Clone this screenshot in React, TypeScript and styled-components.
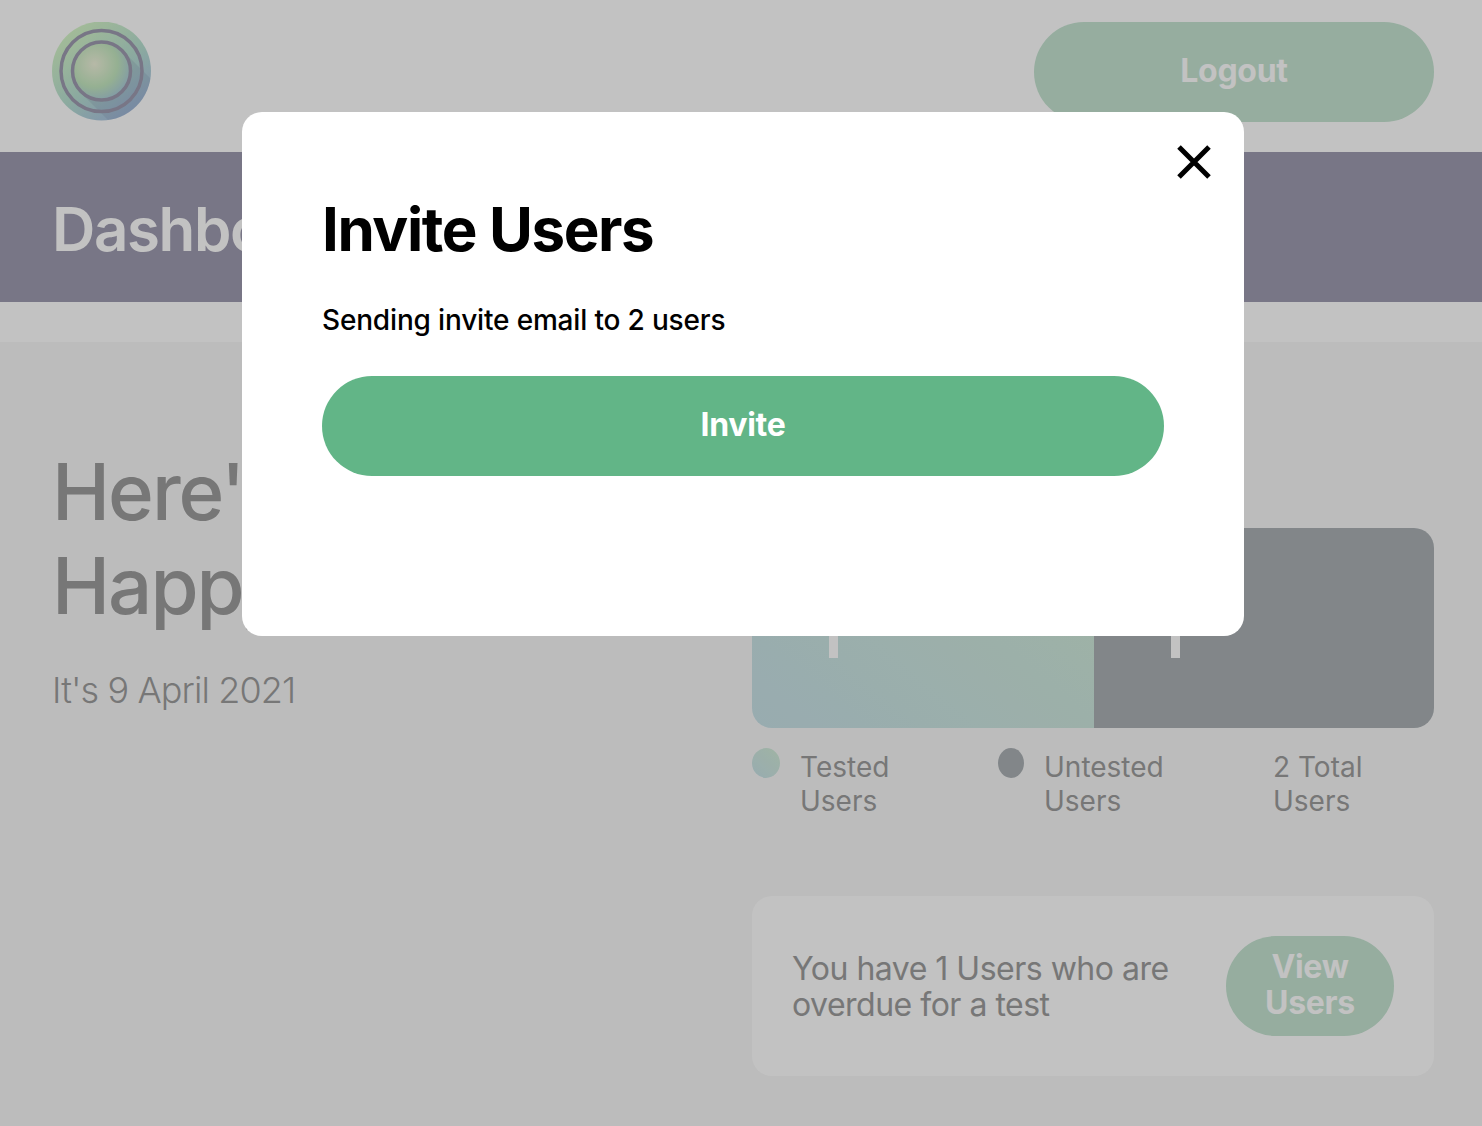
import React from 'react';
import styled, { createGlobalStyle } from 'styled-components';

const GlobalStyle = createGlobalStyle`
  html, body {
    margin: 0;
    padding: 0;
    height: 100%;
    overflow: hidden;
    background: #ffffff;
    font-family: Inter, "Liberation Sans", sans-serif;
  }
  * { box-sizing: border-box; }
`;

const Page = styled.div`
  width: 1482px;
  height: 1126px;
  overflow: hidden;
  background: #fff;
`;

const TopBar = styled.header`
  display: flex;
  justify-content: space-between;
  align-items: center;
  height: 152px;
  padding: 0 48px 8px 52px;
`;

const LogoMark = styled.svg`
  display: block;
  width: 100px;
  height: 100px;
`;

const PillButton = styled.button<{ $width?: number }>`
  border: 0;
  border-radius: 50px;
  height: 100px;
  width: ${p => p.$width ?? 400}px;
  padding: 0 24px 2px;
  background: #c5e4d1;
  color: #fff;
  font-family: inherit;
  font-size: 32px;
  font-weight: 700;
  line-height: 36px;
  letter-spacing: -0.3px;
`;

const Banner = styled.div`
  display: flex;
  align-items: center;
  height: 150px;
  padding: 4px 0 0 52px;
  background: #9e9bb0;
  color: #fff;
  font-size: 60px;
  font-weight: 600;
  letter-spacing: -1.4px;
`;

const Spacer = styled.div`
  height: 40px;
`;

const Content = styled.main`
  display: grid;
  grid-template-columns: 700px 682px;
  height: 784px;
  padding: 0 48px 0 52px;
  background: #f8f8f8;
`;

const Welcome = styled.section`
  padding-top: 103px;
`;

const Greeting = styled.h1`
  margin: 0;
  font-size: 78px;
  font-weight: 500;
  line-height: 94px;
  letter-spacing: -2px;
  color: #9d9d9d;
  white-space: nowrap;
`;

const DateLine = styled.p`
  margin: 35px 0 0;
  font-size: 36px;
  font-weight: 300;
  line-height: 44px;
  letter-spacing: -0.9px;
  color: #9d9d9d;
`;

const Stats = styled.section`
  padding-top: 186px;
`;

const Chart = styled.div`
  display: flex;
  height: 200px;
  border-radius: 20px;
  overflow: hidden;
`;

const ChartSegment = styled.div<{ $variant: 'tested' | 'untested' }>`
  position: relative;
  width: ${p => (p.$variant === 'tested' ? 342 : 340)}px;
  background: ${p =>
    p.$variant === 'tested' ? 'linear-gradient(40deg, #c8e2e8, #d2ecd8)' : '#abb1b5'};
`;

const Tick = styled.span`
  position: absolute;
  left: 77px;
  bottom: 70px;
  width: 9px;
  height: 100px;
  background: #fff;
`;

const Legend = styled.div`
  display: grid;
  grid-template-columns: 246px 275px 1fr;
  margin-top: 20px;
`;

const LegendItem = styled.div`
  display: flex;
  gap: 20px;
  padding-right: 40px;
`;

const Dot = styled.span<{ $variant: 'tested' | 'untested' }>`
  flex: none;
  width: ${p => (p.$variant === 'tested' ? 28 : 26)}px;
  height: 30px;
  border-radius: 50%;
  background: ${p =>
    p.$variant === 'tested' ? 'linear-gradient(40deg, #c8e2e8, #d2ecd8)' : '#abb1b5'};
`;

const LegendText = styled.span`
  padding-top: 2px;
  font-size: 28px;
  line-height: 34px;
  color: #9d9d9d;
`;

const OverdueCard = styled.div`
  display: flex;
  align-items: center;
  justify-content: space-between;
  height: 180px;
  margin-top: 78px;
  padding: 0 40px;
  border-radius: 20px;
  background: #fff;
`;

const OverdueText = styled.p`
  margin: 0;
  padding-top: 2px;
  width: 400px;
  font-size: 32px;
  line-height: 36px;
  letter-spacing: -0.5px;
  color: #9d9d9d;
`;

const Overlay = styled.div`
  position: fixed;
  inset: 0;
  padding: 112px 0 0 242px;
  background: rgba(0, 0, 0, 0.24);
`;

const Modal = styled.div`
  position: relative;
  width: 1002px;
  height: 524px;
  padding: 81px 80px 0;
  border-radius: 20px;
  background: #fff;
`;

const CloseButton = styled.button`
  position: absolute;
  top: 30px;
  right: 30px;
  display: flex;
  width: 40px;
  height: 40px;
  padding: 0;
  border: 0;
  background: none;
`;

const ModalTitle = styled.h2`
  margin: 0;
  font-size: 60px;
  font-weight: 700;
  line-height: 72px;
  letter-spacing: -1.4px;
  color: #000;
`;

const ModalText = styled.p`
  margin: 38px 0 0;
  font-size: 28px;
  font-weight: 500;
  line-height: 34px;
  letter-spacing: -0.17px;
  color: #000;
`;

const InviteButton = styled(PillButton)`
  display: block;
  width: 100%;
  margin-top: 39px;
  background: #62b587;
`;

const Logo = () => (
  <LogoMark viewBox="0 0 100 100">
    <defs>
      <linearGradient id="logoRim" x1="0.2" y1="0.1" x2="0.8" y2="0.9">
        <stop offset="0" stopColor="#d5f5c8" />
        <stop offset="0.55" stopColor="#b8e0d2" />
        <stop offset="1" stopColor="#a9c2e2" />
      </linearGradient>
      <radialGradient id="logoCore" cx="0.38" cy="0.38" r="0.72">
        <stop offset="0" stopColor="#f0f3dc" />
        <stop offset="0.55" stopColor="#c4e8c0" />
        <stop offset="1" stopColor="#a5c6e0" />
      </radialGradient>
      <clipPath id="logoClip">
        <circle cx="49.5" cy="49" r="49.5" />
      </clipPath>
    </defs>
    <circle cx="49.5" cy="49" r="49.5" fill="url(#logoRim)" />
    <path
      d="M28 70 L70 28 L110 68 L68 110 Z"
      fill="#6f7f9c"
      opacity="0.16"
      clipPath="url(#logoClip)"
    />
    <circle cx="49.5" cy="49" r="40.5" fill="none" stroke="#9e9bb0" strokeWidth="3.5" />
    <circle cx="49.5" cy="49" r="29" fill="url(#logoCore)" stroke="#9e9bb0" strokeWidth="3.5" />
  </LogoMark>
);

const App = () => (
  <Page>
    <GlobalStyle />
    <TopBar>
      <Logo />
      <PillButton>Logout</PillButton>
    </TopBar>
    <Banner>Dashboard</Banner>
    <Spacer />
    <Content>
      <Welcome>
        <Greeting>
          Here's how
          <br />
          Happy
        </Greeting>
        <DateLine>It's 9 April 2021</DateLine>
      </Welcome>
      <Stats>
        <Chart>
          <ChartSegment $variant="tested">
            <Tick />
          </ChartSegment>
          <ChartSegment $variant="untested">
            <Tick />
          </ChartSegment>
        </Chart>
        <Legend>
          <LegendItem>
            <Dot $variant="tested" />
            <LegendText>Tested Users</LegendText>
          </LegendItem>
          <LegendItem>
            <Dot $variant="untested" />
            <LegendText>Untested Users</LegendText>
          </LegendItem>
          <LegendItem>
            <LegendText>2 Total Users</LegendText>
          </LegendItem>
        </Legend>
        <OverdueCard>
          <OverdueText>You have 1 Users who are overdue for a test</OverdueText>
          <PillButton $width={168}>View Users</PillButton>
        </OverdueCard>
      </Stats>
    </Content>
    <Overlay>
      <Modal>
        <CloseButton aria-label="Close">
          <svg width="40" height="40" viewBox="0 0 40 40">
            <path d="M5 5 L35 35 M35 5 L5 35" stroke="#000" strokeWidth="5" fill="none" />
          </svg>
        </CloseButton>
        <ModalTitle>Invite Users</ModalTitle>
        <ModalText>Sending invite email to 2 users</ModalText>
        <InviteButton>Invite</InviteButton>
      </Modal>
    </Overlay>
  </Page>
);

export default App;
